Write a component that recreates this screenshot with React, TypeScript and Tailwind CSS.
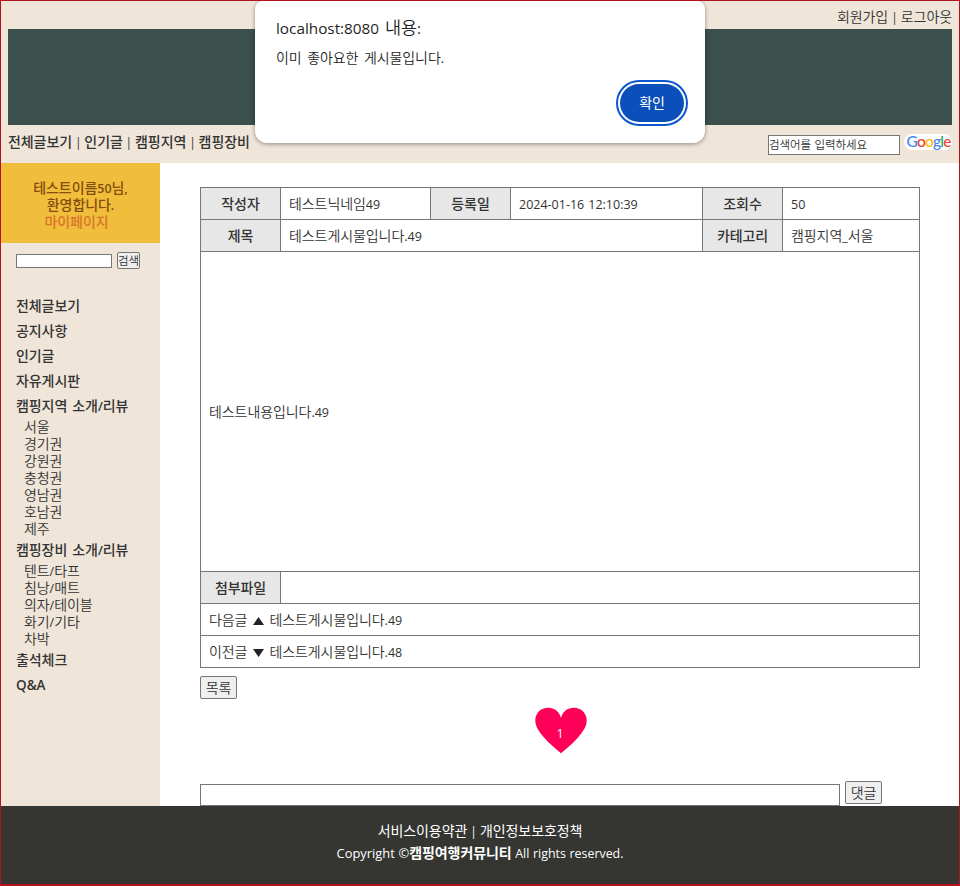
import React from "react";

// Korean runs use the body face; Latin runs are set slightly smaller in a humanist sans.
function T({ children, latin = "text-[12.5px] font-normal" }: { children: string; latin?: string }) {
  const parts = children.split(/([A-Za-z0-9.:,&_/|©-]+)/);
  return (
    <span>
      {parts.map((p, i) =>
        i % 2 === 1 ? (
          <span
            key={i}
            className={`font-['Open_Sans','Noto_Sans_CJK_KR',sans-serif] leading-none tracking-normal ${p === "|" ? "text-[12px] font-normal" : latin}`}
          >
            {p}
          </span>
        ) : (
          p
        )
      )}
    </span>
  );
}

const strong = "text-[12.5px] font-semibold";

function Head({ children }: { children: string }) {
  return (
    <div className="flex w-20 shrink-0 items-center justify-center border-r border-[#777] bg-[#e7e7e7] font-medium">
      <T>{children}</T>
    </div>
  );
}

const regions = ["서울", "경기권", "강원권", "충청권", "영남권", "호남권", "제주"];
const gear = ["텐트/타프", "침낭/매트", "의자/테이블", "화기/기타", "차박"];

function Sub({ items }: { items: string[] }) {
  return (
    <ul className="pl-2 font-[350]">
      {items.map((s) => (
        <li key={s} className="h-[17px]"><T>{s}</T></li>
      ))}
    </ul>
  );
}

function Menu({ children, latin = strong }: { children: string; latin?: string }) {
  return (
    <div className="h-[25px] pt-1 font-medium [word-spacing:2px]">
      <T latin={latin}>{children}</T>
    </div>
  );
}

function Google() {
  return (
    <div className="mt-px ml-1 flex h-4 w-12 items-center justify-center rounded-lg bg-white pl-px font-['Lato',sans-serif] text-[15.5px] leading-none font-medium tracking-[-0.8px]">
      <span className="text-[#4285f4]">G</span>
      <span className="text-[#ea4335]">o</span>
      <span className="text-[#fbbc05]">o</span>
      <span className="text-[#4285f4]">g</span>
      <span className="text-[#34a853]">l</span>
      <span className="text-[#ea4335]">e</span>
    </div>
  );
}

export default function App() {
  return (
    <div className="relative flex h-[886px] w-[960px] flex-col overflow-hidden border border-b-2 border-[#b5121f] bg-white font-['Noto_Sans_CJK_KR',sans-serif] text-[14px] leading-[17px] tracking-[-0.08px] whitespace-nowrap text-[#333]">
      <header className="h-[162px] shrink-0 bg-[#efe5d9] px-[7px]">
        <div className="flex h-7 items-end justify-end pb-1 font-[350]">
          <T>회원가입 | 로그아웃</T>
        </div>
        <div className="h-24 bg-[#3b4f4b]" />
        <div className="flex justify-between">
          <nav className="pt-2 font-medium [word-spacing:-0.2px]"><T>전체글보기 | 인기글 | 캠핑지역 | 캠핑장비</T></nav>
          <div className="flex pt-2">
            <div className="mt-[2px] h-5 w-[132px] border border-[#767676] bg-white text-[11.5px] leading-[17px] font-[350] [word-spacing:1px]">검색어를 입력하세요</div>
            <Google />
          </div>
        </div>
      </header>

      <div className="flex h-[643px] shrink-0">
        <aside className="w-[159px] shrink-0 bg-[#efe5d9]">
          <div className="h-20 bg-[#f1be3b] pt-4 text-center font-medium text-[#844d0e]">
            <div className="h-[17px]"><T latin={strong}>테스트이름50님,</T></div>
            <div className="h-[17px]"><T latin={strong}>환영합니다.</T></div>
            <div className="h-[17px] pr-2 text-[#d8722c]">마이페이지</div>
          </div>
          <div className="flex h-[50px] pt-[9px] pl-[15px]">
            <div className="mt-[2px] h-[14px] w-24 border border-[#767676] bg-white" />
            <div className="ml-[5px] flex h-[17px] w-[23px] items-center justify-center rounded-xs border border-[#767676] bg-[#efefef] text-[11.5px] font-[350]">검색</div>
          </div>
          <div className="pl-[15px]">
            {["전체글보기", "공지사항", "인기글", "자유게시판", "캠핑지역 소개/리뷰"].map((s) => (
              <Menu key={s}>{s}</Menu>
            ))}
            <Sub items={regions} />
            <Menu>캠핑장비 소개/리뷰</Menu>
            <Sub items={gear} />
            <Menu>출석체크</Menu>
            <Menu latin="text-[13.5px] font-semibold">Q&A</Menu>
          </div>
        </aside>

        <main className="flex-1 pt-6 pl-10">
          <div className="w-[720px] border border-[#777] font-[350]">
            <div className="flex h-8 border-b border-[#777]">
              <Head>작성자</Head>
              <div className="flex w-[150px] items-center border-r border-[#777] pl-2"><T>테스트닉네임49</T></div>
              <Head>등록일</Head>
              <div className="flex w-48 items-center border-r border-[#777] pl-2 [word-spacing:1px]"><T>2024-01-16 12:10:39</T></div>
              <Head>조회수</Head>
              <div className="flex items-center pl-2"><T>50</T></div>
            </div>
            <div className="flex h-8 border-b border-[#777]">
              <Head>제목</Head>
              <div className="flex w-[422px] items-center border-r border-[#777] pl-2"><T>테스트게시물입니다.49</T></div>
              <Head>카테고리</Head>
              <div className="flex items-center pl-2"><T>캠핑지역_서울</T></div>
            </div>
            <div className="flex h-80 items-center border-b border-[#777] pl-2"><T>테스트내용입니다.49</T></div>
            <div className="flex h-8 border-b border-[#777]"><Head>첨부파일</Head></div>
            <div className="flex h-8 items-center border-b border-[#777] pl-2">
              <span>다음글</span>
              <svg className="mr-[5px] ml-[6px] mt-[3px] h-2 w-[11px]" viewBox="0 0 11 8"><path d="M5.5 0 11 8H0z" fill="#222" /></svg>
              <T>테스트게시물입니다.49</T>
            </div>
            <div className="flex h-[31px] items-center pl-2">
              <span>이전글</span>
              <svg className="mr-[5px] ml-[6px] mt-[3px] h-2 w-[11px]" viewBox="0 0 11 8"><path d="M0 0h11L5.5 8z" fill="#222" /></svg>
              <T>테스트게시물입니다.48</T>
            </div>
          </div>
          <div className="mt-2 flex h-[23px] w-[37px] items-center justify-center rounded-xs border border-[#767676] bg-[#efefef] font-[350]">목록</div>
          <div className="mt-2 grid h-[47px] w-[720px] place-items-center">
            <svg className="col-start-1 row-start-1 ml-px h-[47px] w-[52px]" viewBox="0 0 52 47"><path d="M26 46.3 C20 41 14.5 37 9 30.5 C4 24.5 0.3 19.5 0.3 13.5 C0.3 6 6 0.7 13 0.7 C19.5 0.7 24.5 4.5 26 11 C27.5 4.5 32.5 0.7 39 0.7 C46 0.7 51.7 6 51.7 13.5 C51.7 19.5 48 24.5 43 30.5 C37.5 37 32 41 26 46.3Z" fill="#ff0058" /></svg>
            <span className="col-start-1 row-start-1 pt-1 text-white"><T>1</T></span>
          </div>
          <div className="mt-[27px] flex">
            <div className="mt-[3px] h-[22px] w-[640px] border border-[#767676] bg-white" />
            <div className="ml-[5px] flex h-[23px] w-[37px] items-center justify-center rounded-xs border border-[#767676] bg-[#efefef] font-[350]">댓글</div>
          </div>
        </main>
      </div>

      <footer className="flex-1 bg-[#353531] pt-[13px] text-center leading-[22px] text-white">
        <div className="h-[22px]"><T>서비스이용약관 | 개인정보보호정책</T></div>
        <div className="h-[22px] [word-spacing:0.6px]">
          <T latin="text-[12.9px]">Copyright ©</T>
          <span className="font-bold">캠핑여행커뮤니티</span>
          <T latin="text-[12.4px]"> All rights reserved.</T>
        </div>
      </footer>

      <div role="dialog" className="absolute top-0 left-[254px] flex h-[142px] w-[450px] flex-col rounded-b-xl rounded-t-lg bg-white px-[21px] text-[#1f1f1f] shadow-[0_1px_4px_rgba(0,0,0,0.4)]">
        <div className="mt-[14px] h-6 text-[17.5px] leading-6 font-[350] [word-spacing:2px]"><T latin="text-[15.3px] font-normal">localhost:8080 내용:</T></div>
        <div className="mt-[10px] h-[17px] font-[350] [word-spacing:2.5px]"><T>이미 좋아요한 게시물입니다.</T></div>
        <button className="mt-[14px] mr-[-4px] flex h-[46px] w-[72px] items-center justify-center self-end rounded-full border-2 border-[#0b57d0] bg-white p-[2px]">
          <span className="flex h-full w-full items-center justify-center rounded-full bg-[#0b4fba] pb-px text-white">확인</span>
        </button>
      </div>
    </div>
  );
}
